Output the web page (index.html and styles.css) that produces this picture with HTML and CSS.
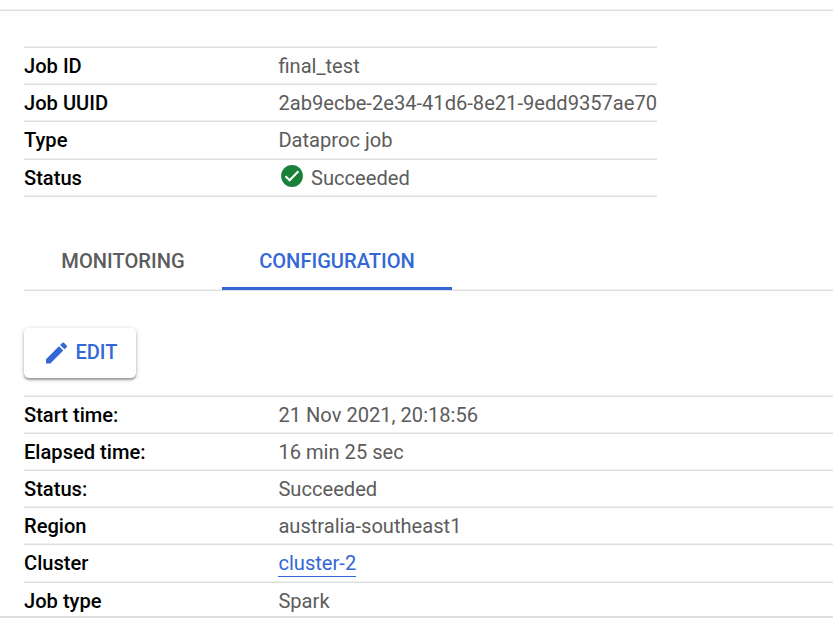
FILE: index.html
```html
<!DOCTYPE html>
<html lang="en">
<head>
<meta charset="utf-8">
<title>Job details</title>
<link rel="stylesheet" href="styles.css">
</head>
<body>
<main class="page">
  <dl class="summary">
    <div class="row"><dt>Job ID</dt><dd>final_test</dd></div>
    <div class="row"><dt>Job UUID</dt><dd>2ab9ecbe-2e34-41d6-8e21-9edd9357ae70</dd></div>
    <div class="row tall"><dt>Type</dt><dd>Dataproc job</dd></div>
    <div class="row"><dt>Status</dt><dd class="status"><svg class="check" viewBox="0 0 22 22"><circle cx="11" cy="11" r="10.9" fill="#188038"/><path d="M4.5 11.2l4.1 4.1 8.8-9" fill="none" stroke="#fff" stroke-width="2.1"/></svg>Succeeded</dd></div>
  </dl>
  <nav class="tabs">
    <a class="tab monitoring">MONITORING</a>
    <a class="tab active">CONFIGURATION</a>
  </nav>
  <button class="edit"><svg class="pencil" viewBox="3 3 18 18"><path fill="#3367d6" d="M3 17.25V21h3.75L17.81 9.94l-3.75-3.75L3 17.25zM20.71 7.04a1 1 0 0 0 0-1.41l-2.34-2.34a1 1 0 0 0-1.41 0l-1.83 1.83 3.75 3.75 1.83-1.83z"/></svg><span>EDIT</span></button>
  <dl class="details">
    <div class="row"><dt>Start time:</dt><dd>21 Nov 2021, 20:18:56</dd></div>
    <div class="row"><dt>Elapsed time:</dt><dd>16 min 25 sec</dd></div>
    <div class="row"><dt>Status:</dt><dd>Succeeded</dd></div>
    <div class="row"><dt>Region</dt><dd>australia-southeast1</dd></div>
    <div class="row tall"><dt>Cluster</dt><dd><a class="link">cluster-2</a></dd></div>
    <div class="row last"><dt>Job type</dt><dd>Spark</dd></div>
  </dl>
</main>
</body>
</html>
```
FILE: styles.css
```css
:root { --rule: linear-gradient(#f0f0f0 50%, #dedede 50%); }
* { box-sizing: border-box; }
body { margin: 0; background: #fff; font: 20px/24px Roboto, sans-serif; color: #000; }
.page { height: 618px; overflow: hidden; padding: 46px 0 0 24px; background: var(--rule) 0 9px / 100% 2px no-repeat, linear-gradient(#dedede, #dedede) 0 616px / 100% 2px no-repeat; }
dl, dd { margin: 0; }
dl { padding-top: 2px; background: var(--rule) 0 0 / 100% 2px no-repeat; font-size: 20.12px; }
.summary { width: 633px; }
.row { display: flex; align-items: flex-start; height: 37px; padding-top: 6px; background: var(--rule) 0 100% / 100% 2px no-repeat; white-space: nowrap; }
.tall { height: 38px; }
.last { height: 33px; background: none; }
dt { width: 254px; flex: none; font-weight: 500; }
dd { color: #5c5c5c; padding-left: .4px; }
.status { display: flex; }
.check { width: 22px; height: 22px; margin: -1px 8px 0 2.6px; }
.tabs { display: flex; height: 60px; margin-top: 34px; background: var(--rule) 0 100% / 100% 2px no-repeat; }
.tab { font-size: 20.12px; font-weight: 500; color: #5c5c5c; text-align: center; line-height: 60px; }
.monitoring { width: 198px; }
.active { width: 230px; height: 59px; color: #3367d6; border-bottom: 3px solid #3367d6; }
.edit { display: flex; align-items: center; width: 112px; height: 50px; margin: 37px 0 17px; padding: 0 0 0 22px; border: 0; border-radius: 5px; background: #fff; box-shadow: 0 2px 2px rgba(0,0,0,.3), 0 1px 5px rgba(0,0,0,.2); font: 500 20px/24px Roboto, sans-serif; color: #3367d6; }
.edit span { margin-bottom: 2px; }
.pencil { width: 21px; height: 22px; margin-right: 8.4px; }
.link { display: block; height: 26px; color: #3367d6; border-bottom: 1px solid #3367d6; }
```
